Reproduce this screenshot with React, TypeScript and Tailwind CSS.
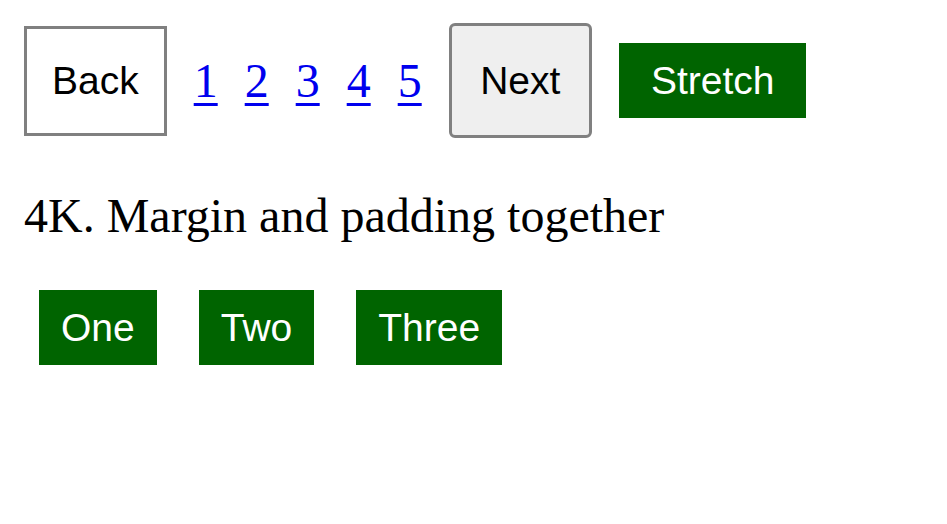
import React from "react";

const pages = [1, 2, 3, 4, 5];
const boxes = ["One", "Two", "Three"];

const App = () => {
  return (
    <div className="min-h-screen bg-white px-[24px] pt-[23px] font-['Liberation_Serif',serif] text-black">
      {/* pager row */}
      <div className="flex items-center gap-[27px]">
        <button className="border-[3px] border-[#808080] bg-white px-[25px] py-[30px] font-['Liberation_Sans',Arial,sans-serif] text-[39px] leading-[44px] text-black">
          Back
        </button>
        {pages.map((p) => (
          <a
            key={p}
            href="#"
            className="text-[48px] leading-[53px] text-[#0000ee] underline decoration-[3px] underline-offset-[6px]"
          >
            {p}
          </a>
        ))}
        <button className="rounded-[6px] border-[3px] border-[#808080] bg-[#efefef] px-[28.5px] py-[32px] font-['Liberation_Sans',Arial,sans-serif] text-[39px] leading-[45px] text-black">
          Next
        </button>
        <button className="bg-[#006400] px-[32px] py-[15px] font-['Liberation_Sans',Arial,sans-serif] text-[39px] leading-[45px] text-white">
          Stretch
        </button>
      </div>

      <h2 className="mt-[51px] text-[48px] leading-[53px] font-normal">4K. Margin and padding together</h2>

      {/* margin + padding boxes */}
      <div className="mt-[48px] ml-[15px] flex gap-[42px]">
        {boxes.map((b) => (
          <div
            key={b}
            className="bg-[#006400] px-[22px] py-[15px] font-['Liberation_Sans',Arial,sans-serif] text-[39px] leading-[45px] text-white"
          >
            {b}
          </div>
        ))}
      </div>
    </div>
  );
};

export default App;
